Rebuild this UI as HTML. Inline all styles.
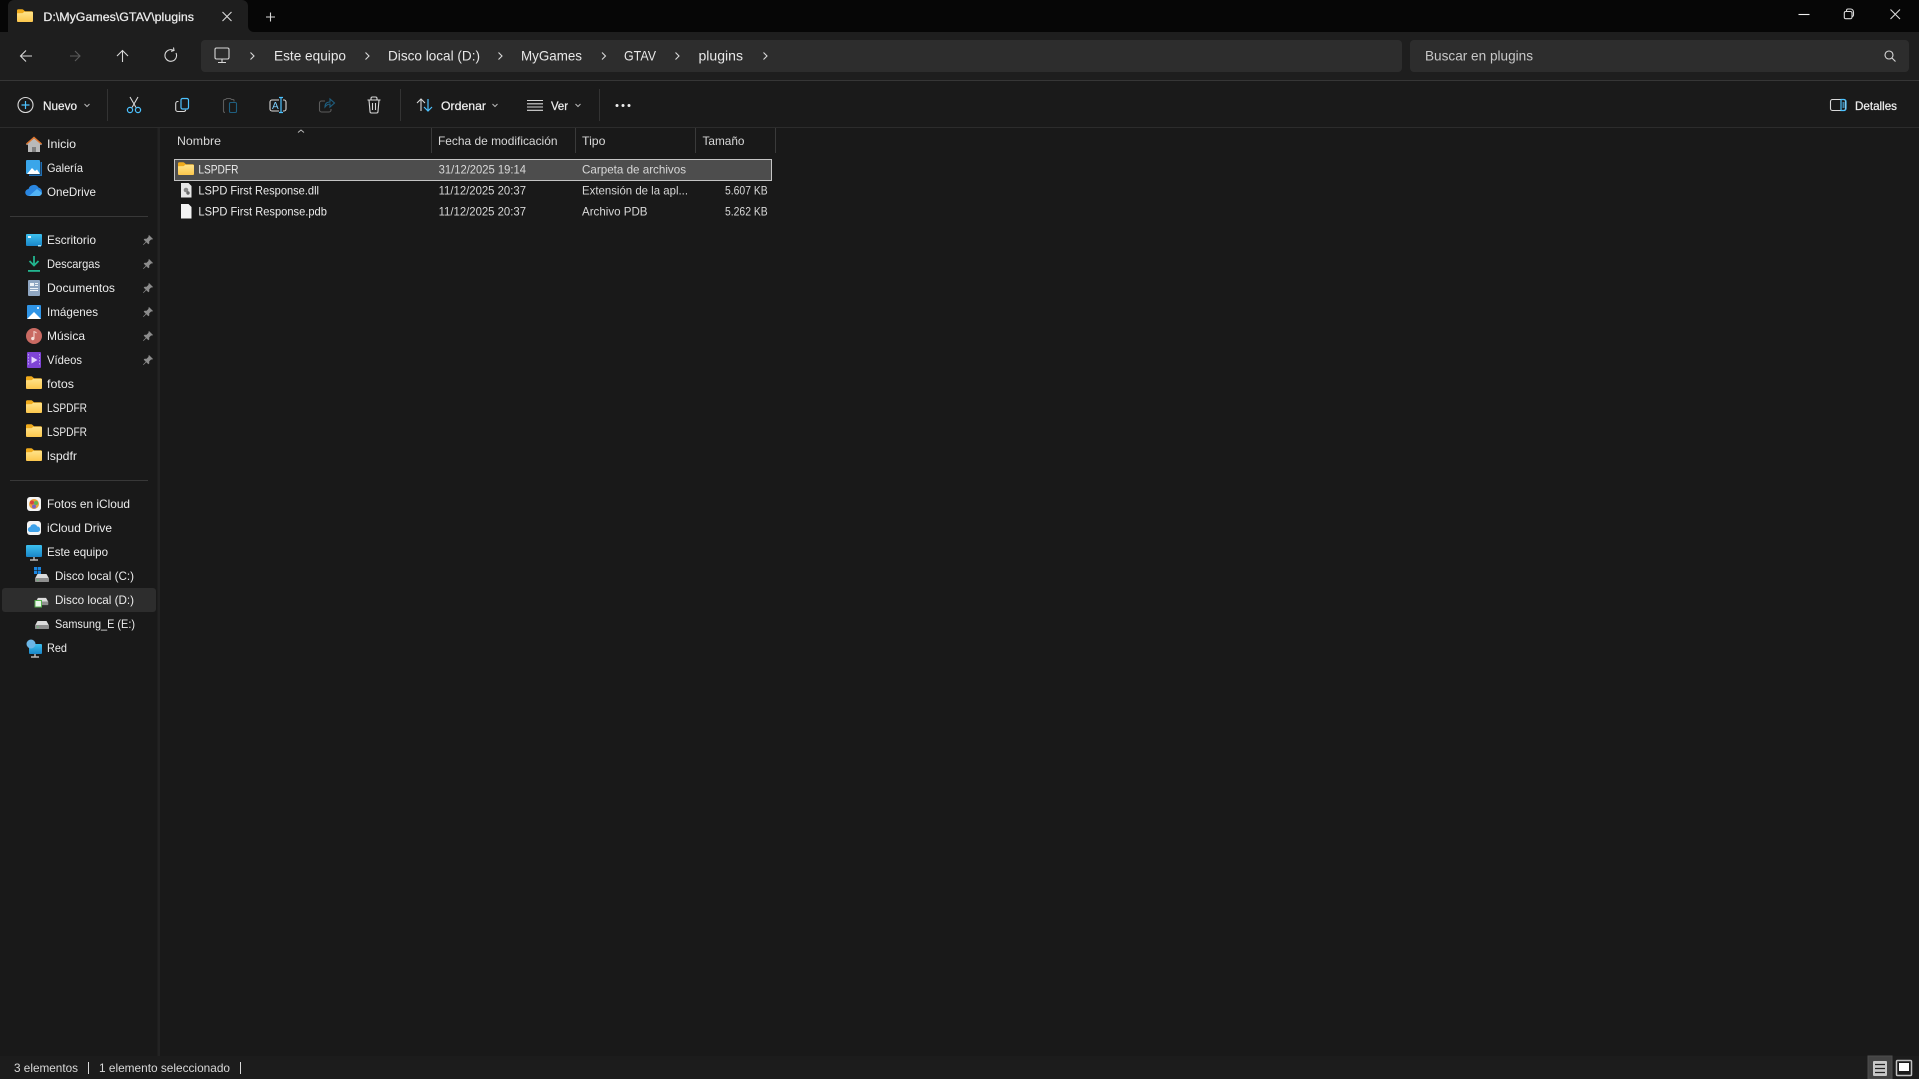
<!DOCTYPE html>
<html lang="es"><head><meta charset="utf-8"><title>D:\MyGames\GTAV\plugins</title>
<style>
html,body{margin:0;padding:0;background:#191919;overflow:hidden;width:1919px;height:1079px}
svg{display:block}
text{font-family:"Liberation Sans",sans-serif;font-size:12px;fill:#ececec}
.a{font-size:14px;fill:#e8e8e8}
.g{fill:#d8d8d8}
.m{fill:#ececec;stroke:#ececec;stroke-width:.25}
.s{fill:none;stroke:#d8d8d8;stroke-width:1.1}
.b{fill:none;stroke:#4cc2ff;stroke-width:1.2}
.d{fill:none;stroke:#5c5c5c;stroke-width:1.1}
.e{fill:none;stroke:#1f5f80;stroke-width:1.1}
.c{fill:none;stroke:#b8b8b8;stroke-width:1}
</style></head><body>
<svg width="1919" height="1079" viewBox="0 0 1919 1079" xmlns="http://www.w3.org/2000/svg">
<defs>
<linearGradient id="fg" x1="0" y1="0" x2="0" y2="1"><stop offset="0" stop-color="#ffe38a"/><stop offset="1" stop-color="#fcc74d"/></linearGradient>
<linearGradient id="sk" x1="0" y1="0" x2="0" y2="1"><stop offset="0" stop-color="#3cc0ee"/><stop offset="1" stop-color="#1a86c8"/></linearGradient>
<symbol id="folder" viewBox="0 0 16 16"><path d="M0 2.500a1.300 1.300 0 0 1 1.300-1.300h3.900a1.500 1.500 0 0 1 1 .4l1.800 1.600h6.700A1.300 1.300 0 0 1 16 4.500V6H0z" fill="#f0ab1c"/><path d="M0 5.200l5.800-.1 1.400-1.300h7.500A1.300 1.300 0 0 1 16 5.100v7.600a1.300 1.300 0 0 1-1.300 1.300H1.300A1.300 1.300 0 0 1 0 12.700z" fill="url(#fg)"/></symbol>
<symbol id="pin" viewBox="0 0 12 12"><path d="M7 1l4 4-1 .6-.8-.2-2 2 .1 2L6.400 10.300 4.300 8.200 1.500 11l-.5-.5 2.800-2.800L1.700 5.600l.9-.9 2 .1 2-2L6.400 2z" fill="#8c8c8c"/></symbol>
<symbol id="drive" viewBox="0 0 16 10"><path d="M3.500 1h9L15 5.500H1z" fill="#dcdcdc"/><rect x="1" y="5" width="14" height="4" rx=".8" fill="#8f8f8f"/><rect x="3" y="6.500" width="1.500" height="1" fill="#53d26e"/></symbol>
</defs>

<rect width="1919" height="32" fill="#060606"/>
<rect y="32" width="1919" height="48" fill="#1e1e1e"/>
<path d="M8 32V6a6 6 0 0 1 6-6h228a6 6 0 0 1 6 6v20a6 6 0 0 0 6 6z" fill="#1e1e1e"/>
<rect y="80" width="1919" height="1" fill="#363636"/>
<rect y="81" width="1919" height="46" fill="#1a1a1a"/>
<rect y="127" width="1919" height="1" fill="#2c2c2c"/>
<rect y="128" width="1919" height="951" fill="#191919"/>
<rect x="157.500" y="128" width="2.500" height="928" fill="#232323"/>
<rect y="1056" width="1919" height="23" fill="#1c1c1c"/>

<use href="#folder" x="17" y="8" width="16" height="16"/>
<text class="m" x="43.400" y="21" textLength="150.600" lengthAdjust="spacingAndGlyphs">D:\MyGames\GTAV\plugins</text>
<path d="M222.500 12l9 9M231.500 12l-9 9" class="s"/>
<path d="M270.500 12.500v9M266 17h9" class="s"/>
<path d="M1798.500 14.500h11" stroke="#f0f0f0" stroke-width="1.100"/>
<path d="M1846.500 11V10.500a1.500 1.500 0 0 1 1.500-1.500h2.500a3 3 0 0 1 3 3v3a1.500 1.500 0 0 1-1.500 1.500M1845.800 11.500h4.700a1.500 1.500 0 0 1 1.500 1.500v4.200a1.500 1.500 0 0 1-1.500 1.500h-4.700a1.500 1.500 0 0 1-1.500-1.500V13a1.500 1.500 0 0 1 1.500-1.500z" class="s"/>
<path d="M1890.500 9.500l9.500 9.500M1900 9.500l-9.500 9.500" class="s"/>

<path d="M32 56H21M26 50.500L20.500 56l5.500 5.500" class="s"/>
<path d="M70 56h10M75 51l5 5-5 5" class="d"/>
<path d="M122.500 62V50.500M117 56l5.500-5.500L128 56" class="s"/>
<path d="M176 53a5.800 5.800 0 1 1-2.800-2.800M173.500 47.500l.5 3-3 .8" class="s"/>

<rect x="201" y="40" width="1201" height="32" rx="4" fill="#2d2d2d"/>
<rect x="1410" y="40" width="499" height="32" rx="4" fill="#2d2d2d"/>
<path d="M215 49.500a1.500 1.500 0 0 1 1.500-1.500h11a1.500 1.500 0 0 1 1.500 1.500v8a1.500 1.500 0 0 1-1.500 1.500h-11a1.500 1.500 0 0 1-1.500-1.500zM222 59v3M218 62.500h8" class="s"/>
<g class="s"><path d="M250.500 52.500l3.500 3.500-3.500 3.500M365.500 52.500l3.500 3.500-3.500 3.500M498.500 52.500l3.500 3.500-3.500 3.500M602 52.500l3.500 3.500-3.500 3.500M675.500 52.500l3.500 3.500-3.500 3.500M763.500 52.500l3.500 3.500-3.500 3.500"/></g>
<text class="a" x="274" y="60.500" textLength="72" lengthAdjust="spacingAndGlyphs">Este equipo</text>
<text class="a" x="388" y="60.500" textLength="92" lengthAdjust="spacingAndGlyphs">Disco local (D:)</text>
<text class="a" x="521" y="60.500" textLength="61" lengthAdjust="spacingAndGlyphs">MyGames</text>
<text class="a" x="624" y="60.500" textLength="32" lengthAdjust="spacingAndGlyphs">GTAV</text>
<text class="a" x="698.500" y="60.500" textLength="44.500" lengthAdjust="spacingAndGlyphs">plugins</text>
<text class="a" x="1425" y="60.500" textLength="108" lengthAdjust="spacingAndGlyphs" style="fill:#c8c8c8">Buscar en plugins</text>
<circle cx="1889" cy="55" r="4" class="s"/><path d="M1892 58l3.500 3.500" class="s"/>

<circle cx="25.500" cy="105" r="7.500" class="s"/><path d="M25.500 101v8M21.500 105h8" class="b"/>
<text class="m" x="43" y="110" textLength="34" lengthAdjust="spacingAndGlyphs">Nuevo</text>
<path d="M84.500 104l2.500 2.500 2.500-2.500" class="c"/>
<rect x="107" y="89" width="1" height="32" fill="#333"/>
<path d="M130 97l6 10.500M138 97l-6 10.500" class="s"/><circle cx="130" cy="110" r="2.600" class="b"/><circle cx="138" cy="110" r="2.600" class="b"/>
<path d="M178.500 101.500h-.8a2 2 0 0 0-2 2v6a2 2 0 0 0 2 2h6a2 2 0 0 0 2-1.700" class="s"/><rect x="181" y="98.500" width="7.500" height="10.500" rx="1.500" class="b"/>
<path d="M226 99.500h-1a1.500 1.500 0 0 0-1.500 1.500v10a1.500 1.500 0 0 0 1.500 1.500M226 99.500a1 1 0 0 1 1-1h3a1 1 0 0 1 1 1M231 99.500h2a1 1 0 0 1 1 1v1" class="d"/><rect x="229.500" y="102.500" width="7" height="10" rx="1.200" class="e"/>
<path d="M279 100h-7a2 2 0 0 0-2 2v7a2 2 0 0 0 2 2h7M283 100h1a2 2 0 0 1 2 2v7a2 2 0 0 1-2 2h-1" class="s"/><path d="M281 97.500v15M279 97.500h4M279 112.500h4" class="b"/><text x="272" y="109" style="font-size:10px;fill:#7fd0ff">A</text>
<path d="M325 101h-3.500a2 2 0 0 0-2 2v7a2 2 0 0 0 2 2h7.500a2 2 0 0 0 2-2v-1" class="d"/><path d="M325 107c0-3.500 2-5 5-5v-3l4.500 4-4.500 4v-3c-2 0-3.500 1-5 3z" class="e"/>
<path d="M367.500 100h13M371 100v-1.500a1.500 1.500 0 0 1 1.500-1.500h3a1.500 1.500 0 0 1 1.500 1.500V100M369 100l1 11.500a1.500 1.500 0 0 0 1.500 1.500h5a1.500 1.500 0 0 0 1.500-1.500l1-11.500M372.500 103v7M375.500 103v7" class="s"/>
<rect x="400" y="89" width="1" height="32" fill="#333"/>
<path d="M421 111V99M417 103l4-4 4 4" class="s"/><path d="M428 99v12M424 107l4 4 4-4" class="b"/>
<text class="m" x="441" y="110" textLength="45" lengthAdjust="spacingAndGlyphs">Ordenar</text>
<path d="M492.500 104l2.500 2.500 2.500-2.500" class="c"/>
<path d="M527 100.500h16M527 103.800h16M527 107h16M527 110.300h16" class="s"/>
<text class="m" x="551" y="110" textLength="17" lengthAdjust="spacingAndGlyphs">Ver</text>
<path d="M575.500 104l2.500 2.500 2.500-2.500" class="c"/>
<rect x="599" y="89" width="1" height="32" fill="#333"/>
<circle cx="617" cy="105.500" r="1.500" fill="#eee"/><circle cx="623" cy="105.500" r="1.500" fill="#eee"/><circle cx="629" cy="105.500" r="1.500" fill="#eee"/>
<rect x="1830.500" y="99.500" width="15" height="11" rx="2" class="s"/><path d="M1841 99.500h3a2 2 0 0 1 2 2v7a2 2 0 0 1-2 2h-3zM1842.500 103h2M1842.500 105h2M1842.500 107h2" class="b"/>
<text class="m" x="1855" y="110" textLength="42" lengthAdjust="spacingAndGlyphs">Detalles</text>

<rect x="431" y="128" width="1" height="25" fill="#3a3a3a"/>
<rect x="575" y="128" width="1" height="25" fill="#3a3a3a"/>
<rect x="695" y="128" width="1" height="25" fill="#3a3a3a"/>
<rect x="775" y="128" width="1" height="25" fill="#3a3a3a"/>
<path d="M298 132.500l3-2.500 3 2.500" class="c"/>
<text class="g" x="177" y="145" textLength="44" lengthAdjust="spacingAndGlyphs">Nombre</text>
<text class="g" x="438" y="145" textLength="119.500" lengthAdjust="spacingAndGlyphs">Fecha de modificación</text>
<text class="g" x="582" y="145" textLength="23.500" lengthAdjust="spacingAndGlyphs">Tipo</text>
<text class="g" x="702.500" y="145" textLength="42" lengthAdjust="spacingAndGlyphs">Tamaño</text>

<rect x="174.500" y="159.500" width="597" height="21" fill="#4d4d4d" stroke="#c4c4c4"/>
<use href="#folder" x="178" y="161" width="16" height="16"/>
<text x="198.400" y="173.500" textLength="40" lengthAdjust="spacingAndGlyphs">LSPDFR</text>
<text class="g" x="438.600" y="173.500" textLength="87.400" lengthAdjust="spacingAndGlyphs">31/12/2025 19:14</text>
<text class="g" x="582" y="173.500" textLength="104" lengthAdjust="spacingAndGlyphs">Carpeta de archivos</text>

<path d="M181 183h7.500l3 3v11.500h-10.500z" fill="#e8e8e8"/><circle cx="186" cy="190" r="2.300" fill="#8a8a8a"/><circle cx="188" cy="193" r="1.700" fill="#6a6a6a"/>
<text x="198.400" y="194.500" textLength="120.600" lengthAdjust="spacingAndGlyphs">LSPD First Response.dll</text>
<text class="g" x="438.600" y="194.500" textLength="87.400" lengthAdjust="spacingAndGlyphs">11/12/2025 20:37</text>
<text class="g" x="582" y="194.500" textLength="106" lengthAdjust="spacingAndGlyphs">Extensión de la apl...</text>
<text class="g" x="725" y="194.500" textLength="42.700" lengthAdjust="spacingAndGlyphs">5.607 KB</text>

<path d="M181 204h7.500l3 3v11.500h-10.500z" fill="#f4f4f4"/>
<text x="198.400" y="215.500" textLength="128.500" lengthAdjust="spacingAndGlyphs">LSPD First Response.pdb</text>
<text class="g" x="438.600" y="215.500" textLength="87.400" lengthAdjust="spacingAndGlyphs">11/12/2025 20:37</text>
<text class="g" x="582" y="215.500" textLength="65.500" lengthAdjust="spacingAndGlyphs">Archivo PDB</text>
<text class="g" x="725" y="215.500" textLength="42.700" lengthAdjust="spacingAndGlyphs">5.262 KB</text>

<rect x="10" y="216" width="138" height="1" fill="#383838"/>
<rect x="10" y="480" width="138" height="1" fill="#383838"/>
<rect x="2" y="588" width="154" height="24" rx="3" fill="#2d2d2d"/>

<path d="M34 137l8 7-1 1.200-1-.8v7.600H28v-7.600l-1 .8-1-1.200z" fill="#b9b9b9"/><path d="M34 136.500L26 143.500l1 1 7-6 7 6 1-1z" fill="#e0762e"/><rect x="32" y="147" width="4" height="5" fill="#7f7f7f"/>
<text x="47" y="148" textLength="29" lengthAdjust="spacingAndGlyphs">Inicio</text>
<rect x="26" y="160" width="14" height="14" rx="1" fill="#3aa6ea"/><path d="M27 174l5-6 3 3 2-1.500 3 4.500z" fill="#fff"/><path d="M40.500 162h1.500v14H29v-1.500h11.500z" fill="#1f6fb5"/>
<text x="47" y="172" textLength="36" lengthAdjust="spacingAndGlyphs">Galería</text>
<path d="M29 196a3.500 3.500 0 0 1-.5-7 5.500 5.500 0 0 1 10-1.500 4.500 4.500 0 0 1 3.500 4.500 4 4 0 0 1-4 4z" fill="#2a86e0"/><path d="M29 196l8-7 5 4a3.500 3.500 0 0 1-4 3z" fill="#52b4f5"/>
<text x="47" y="196" textLength="49" lengthAdjust="spacingAndGlyphs">OneDrive</text>

<rect x="26" y="234" width="16" height="12" rx="1" fill="url(#sk)"/><rect x="28" y="236" width="3" height="2" fill="#dff4ff"/><rect x="38" y="245" width="3" height="1.500" fill="#a6ddf2"/>
<text x="47" y="244" textLength="49" lengthAdjust="spacingAndGlyphs">Escritorio</text>
<path d="M34 256v9M29.500 261l4.500 4.500 4.500-4.500" fill="none" stroke="#22b58f" stroke-width="1.800"/><rect x="28" y="270" width="12" height="1.800" fill="#22b58f"/>
<text x="47" y="268" textLength="53" lengthAdjust="spacingAndGlyphs">Descargas</text>
<rect x="28" y="280" width="12" height="16" rx="1" fill="#8fa6c2"/><rect x="30" y="283" width="4" height="3" fill="#eef3f8"/><path d="M35 283.500h3M35 285.500h3M30 288.500h8M30 290.500h8" stroke="#eef3f8" stroke-width="1"/>
<text x="47" y="292" textLength="68" lengthAdjust="spacingAndGlyphs">Documentos</text>
<rect x="27" y="305" width="14" height="14" rx="1" fill="#2f94e6"/><path d="M27 319l7-7 7 7z" fill="#fff"/><circle cx="38" cy="308" r="1" fill="#fff"/>
<text x="47" y="316" textLength="51" lengthAdjust="spacingAndGlyphs">Imágenes</text>
<circle cx="34" cy="336" r="8" fill="#c96a62"/><path d="M34.500 332v6.500a1.700 1.700 0 1 1-1-1.500V331l3 1v1.500z" fill="#f7e0da"/>
<text x="47" y="340" textLength="38" lengthAdjust="spacingAndGlyphs">Música</text>
<rect x="27" y="352" width="14" height="16" rx="1" fill="#7f44d6"/><path d="M31.500 356.500l6 3.500-6 3.500z" fill="#e6d4ff"/><path d="M28.500 354v12M39.500 354v12" stroke="#b69bee" stroke-width="1" stroke-dasharray="1.500 1.500"/>
<text x="47" y="364" textLength="35" lengthAdjust="spacingAndGlyphs">Vídeos</text>
<use href="#pin" x="142" y="234" width="12" height="12"/><use href="#pin" x="142" y="258" width="12" height="12"/><use href="#pin" x="142" y="282" width="12" height="12"/><use href="#pin" x="142" y="306" width="12" height="12"/><use href="#pin" x="142" y="330" width="12" height="12"/><use href="#pin" x="142" y="354" width="12" height="12"/>
<use href="#folder" x="26" y="375" width="16" height="16"/><text x="47" y="388" textLength="27" lengthAdjust="spacingAndGlyphs">fotos</text>
<use href="#folder" x="26" y="399" width="16" height="16"/><text x="47" y="412" textLength="40" lengthAdjust="spacingAndGlyphs">LSPDFR</text>
<use href="#folder" x="26" y="423" width="16" height="16"/><text x="47" y="436" textLength="40" lengthAdjust="spacingAndGlyphs">LSPDFR</text>
<use href="#folder" x="26" y="447" width="16" height="16"/><text x="47" y="460" textLength="30" lengthAdjust="spacingAndGlyphs">lspdfr</text>

<rect x="27" y="497" width="14" height="14" rx="3" fill="#f4f4f4"/><circle cx="34" cy="504" r="5" fill="#e8a03c"/><circle cx="32" cy="502.500" r="2" fill="#d9443f"/><circle cx="36" cy="503" r="2" fill="#62b455"/><circle cx="34" cy="506.500" r="2" fill="#7d62c4"/>
<text x="47" y="508" textLength="83" lengthAdjust="spacingAndGlyphs">Fotos en iCloud</text>
<rect x="27" y="521" width="14" height="14" rx="3" fill="#f4f4f4"/><path d="M30.500 532a2.500 2.500 0 0 1-.3-5 3.700 3.700 0 0 1 7-.5 2.800 2.800 0 0 1 .8 5.500z" fill="#3ea2ea"/>
<text x="47" y="532" textLength="65" lengthAdjust="spacingAndGlyphs">iCloud Drive</text>
<rect x="26" y="545" width="16" height="12" rx="1" fill="url(#sk)"/><path d="M34 557v2.500M30 560h8" stroke="#b8b8b8" stroke-width="1.500"/>
<text x="47" y="556" textLength="61" lengthAdjust="spacingAndGlyphs">Este equipo</text>
<use href="#drive" x="34" y="573" width="16" height="10"/><rect x="34" y="567" width="3.200" height="3.200" fill="#1b86e0"/><rect x="37.800" y="567" width="3.200" height="3.200" fill="#1b86e0"/><rect x="34" y="570.800" width="3.200" height="3.200" fill="#1b86e0"/><rect x="37.800" y="570.800" width="3.200" height="3.200" fill="#1b86e0"/>
<text x="55" y="580" textLength="79" lengthAdjust="spacingAndGlyphs">Disco local (C:)</text>
<use href="#drive" x="34" y="597" width="16" height="9"/><rect x="35" y="600.500" width="6.500" height="6.500" fill="#e8f5e8" stroke="#57b04e"/>
<text x="55" y="604" textLength="79" lengthAdjust="spacingAndGlyphs">Disco local (D:)</text>
<use href="#drive" x="34" y="620" width="16" height="10"/>
<text x="55" y="628" textLength="80" lengthAdjust="spacingAndGlyphs">Samsung_E (E:)</text>
<rect x="29" y="644" width="13" height="10" rx="1" fill="url(#sk)"/><circle cx="31" cy="644" r="4.500" fill="#6cb6e6"/><path d="M35 654v2.500M31 657h8" stroke="#b8b8b8" stroke-width="1.500"/>
<text x="47" y="652" textLength="20" lengthAdjust="spacingAndGlyphs">Red</text>

<text class="g" x="14" y="1072" textLength="64" lengthAdjust="spacingAndGlyphs">3 elementos</text>
<rect x="88" y="1062" width="1" height="12" fill="#d8d8d8"/>
<text class="g" x="99" y="1072" textLength="131" lengthAdjust="spacingAndGlyphs">1 elemento seleccionado</text>
<rect x="240" y="1062" width="1" height="12" fill="#d8d8d8"/>

<rect x="1868" y="1056" width="24" height="23" fill="#434343" stroke="#4d4d4d"/>
<rect x="1873" y="1061" width="14" height="15" rx="1" fill="#c8c8c8"/><path d="M1875 1064.500h10M1875 1068.500h10M1875 1072.500h10" stroke="#222" stroke-width="1.300"/>
<rect x="1896.500" y="1060.500" width="15" height="15" rx="1" fill="#1a1a1a" stroke="#c0c0c0" stroke-width="1.500"/><rect x="1899" y="1063" width="10" height="8" fill="#fff"/>
</svg>
</body></html>
